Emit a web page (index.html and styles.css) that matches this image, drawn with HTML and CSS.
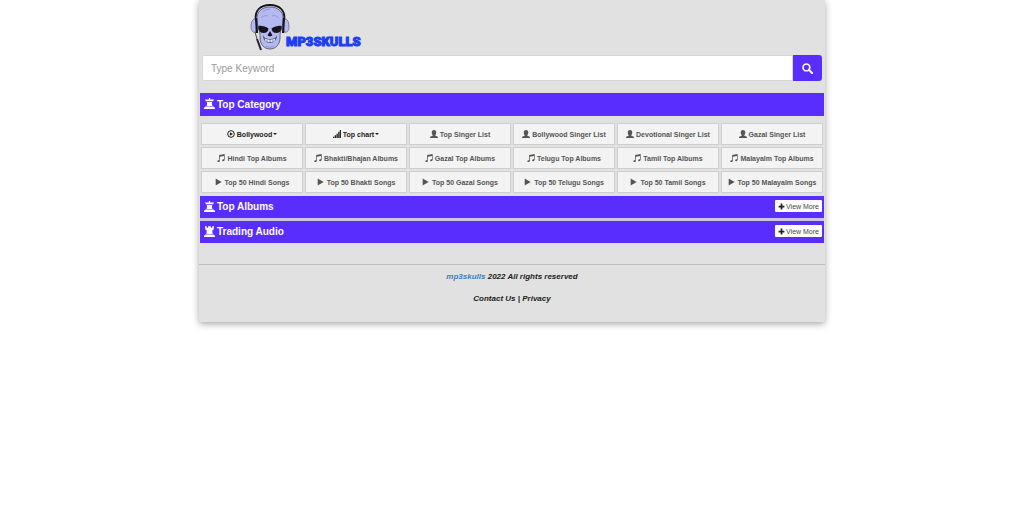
FILE: index.html
```html
<!DOCTYPE html>
<html lang="en">
<head>
  <meta charset="UTF-8" />
  <meta name="viewport" content="width=device-width, initial-scale=1.0"/>
  <title>mp3skulls</title>
  <link rel="stylesheet" href="styles.css">
</head>
<body>
  <!-- Icon set -->
  <svg class="sprite" aria-hidden="true">
    <symbol id="tower" viewBox="0 0 12 12">
      <path d="M5.300 0h1.400v1.500H11L9.800 3.600H2.200L1 1.500h4.300zM3 4.300h6l-.4 1.800.6 2.700H2.800l.6-2.700zM1.800 9.300h8.400l1.800 1.200V12H0v-1.500z"/>
    </symbol>
    <symbol id="rook" viewBox="0 0 12 12">
      <path d="M1 .3h2v1.600h1.500V.3h3v1.600H9V.3h2l-.5 3.500L9 5l.4 3.700H2.600L3 5 1.500 3.800zM1.800 9.300h8.400l1.800 1.200V12H0v-1.500z"/>
    </symbol>
    <symbol id="disc" viewBox="0 0 12 12">
      <circle cx="6" cy="6" r="5" fill="none" stroke="currentColor" stroke-width="1.5"/>
      <path d="M4.3 3.2 9 6 4.3 8.8z"/>
    </symbol>
    <symbol id="signal" viewBox="0 0 12 12">
      <path d="M0 10h2v2H0zM2.6 8h2v4h-2zM5.2 5.5h2V12h-2zM7.8 2.8h2V12h-2zM10.3 0H12v12h-1.7z"/>
    </symbol>
    <symbol id="user" viewBox="0 0 12 12">
      <path d="M6 0c2.300 0 3.400 1.400 3.400 3.600 0 1.700-.6 3.200-1.400 3.900v1l3 1.300c.7.300 1 .8 1 2.200H0c0-1.400.3-1.900 1-2.200l3-1.300v-1C3.200 6.800 2.600 5.300 2.600 3.600 2.600 1.400 3.700 0 6 0z"/>
    </symbol>
    <symbol id="music" viewBox="0 0 12 12">
      <path d="M3.200 1.600 11.500 0v8.800c0 1.300-1 2-2.200 2-1 0-1.600-.5-1.600-1.200 0-1 1.200-1.700 2.800-1.600V3L4.300 4.200v6c0 1.200-1 1.800-2.200 1.800-1 0-1.700-.5-1.700-1.200 0-1 1.200-1.700 2.800-1.600z"/>
    </symbol>
    <symbol id="play" viewBox="0 0 12 12">
      <path d="M1 .8 10 6 1 11.200z"/>
    </symbol>
    <symbol id="plus" viewBox="0 0 12 12">
      <path d="M4.500 1h3v3.500H11v3H7.500V11h-3V7.500H1v-3h3.500z"/>
    </symbol>
    <symbol id="search" viewBox="0 0 12 12">
      <circle cx="4.800" cy="4.800" r="3.700" fill="none" stroke="currentColor" stroke-width="1.800"/>
      <path d="M7.500 7.500 11 11" stroke="currentColor" stroke-width="2.200" stroke-linecap="round"/>
    </symbol>
  </svg>

  <div class="container">
    <header>
      <a href="#" class="logo">
        <svg class="skull" viewBox="0 0 40 48" aria-hidden="true">
          <path d="M6 18C4 8 10 2 20 2s16 6 14 16" fill="none" stroke="#15151f" stroke-width="1.800"/>
          <path d="M7 17C6 9 12 4 20 4s14 5 13 13c0 4-1 7-2 10-1 3-1 4-1 8 0 6-4 11-10 11s-10-5-10-11c0-4 0-5-1-8-1-3-2-6-2-10z" fill="#b4baf0" stroke="#34364f" stroke-width=".7"/>
          <path d="M4 16c-2 1-3 4-3 8s2 6 5 5l1-12zM36 16c2 1 3 4 3 8s-2 6-5 5l-1-12z" fill="#b4baf0" stroke="#5c6086" stroke-width=".7"/>
          <path d="M6 15l1 15M34 15l-1 15" stroke="#15151f" stroke-width="2.200"/>
          <path d="M8.500 23c3-.5 7 .5 10 2.500-.3 3-2 4.500-5 4.500-4 0-5.500-3.500-5-7zM31.500 23c-3-.5-7 .5-10 2.500.3 3 2 4.500 5 4.500 4 0 5.500-3.500 5-7z" fill="#15151f"/>
          <path d="M20 28l-2.500 4.500 2.500 1 2.500-1z" fill="#15151f"/>
          <path d="M13 32c1 3 3 4 7 4s6-1 7-4c0 5-3 8-7 8s-7-3-7-8z" fill="#3a3e60"/>
          <path d="M14.500 35.500c3 1.500 8 1.500 11 0l-1 3c-2 1-7 1-9 0z" fill="#dfe2ff"/>
          <path d="M17 36.500v2.500M20 37v2.500M23 36.500v2.500" stroke="#3a3e60" stroke-width=".5"/>
          <path d="M13 9c2-2 4-3 7-3M11 15c2-2 5-3 7-2M29 15c-2-2-4-3-7-2M16 43c2 1.500 6 1.500 8 0" fill="none" stroke="#8188c6" stroke-width=".7"/>
          <path d="M5 29l2 7" fill="none" stroke="#44444e" stroke-width="1"/>
          <path d="M7 36l4 11" fill="none" stroke="#24242e" stroke-width="2"/>
        </svg>
        <span class="logo-text">MP3SKULLS</span>
      </a>
    </header>

    <form class="search-form">
      <input type="text" id="keyword" aria-label="Type Keyword" placeholder="Type Keyword" />
      <button type="submit" aria-label="Search"><svg class="search-icon"><use href="#search"/></svg></button>
    </form>

    <main>
      <h2 class="bar top-bar"><svg class="bar-icon"><use href="#tower"/></svg>Top Category</h2>

      <nav class="category">
        <button type="button" class="item drop"><svg class="icon"><use href="#disc"/></svg>Bollywood<span class="caret"></span></button>
        <button type="button" class="item drop"><svg class="icon"><use href="#signal"/></svg>Top chart<span class="caret"></span></button>
        <a href="#" class="item"><svg class="icon"><use href="#user"/></svg>Top Singer List</a>
        <a href="#" class="item"><svg class="icon"><use href="#user"/></svg>Bollywood Singer List</a>
        <a href="#" class="item"><svg class="icon"><use href="#user"/></svg>Devotional Singer List</a>
        <a href="#" class="item"><svg class="icon"><use href="#user"/></svg>Gazal Singer List</a>

        <a href="#" class="item"><svg class="icon"><use href="#music"/></svg>Hindi Top Albums</a>
        <a href="#" class="item"><svg class="icon"><use href="#music"/></svg>Bhakti/Bhajan Albums</a>
        <a href="#" class="item"><svg class="icon"><use href="#music"/></svg>Gazal Top Albums</a>
        <a href="#" class="item"><svg class="icon"><use href="#music"/></svg>Telugu Top Albums</a>
        <a href="#" class="item"><svg class="icon"><use href="#music"/></svg>Tamil Top Albums</a>
        <a href="#" class="item"><svg class="icon"><use href="#music"/></svg>Malayalm Top Albums</a>

        <a href="#" class="item"><svg class="icon"><use href="#play"/></svg>Top 50 Hindi Songs</a>
        <a href="#" class="item"><svg class="icon"><use href="#play"/></svg>Top 50 Bhakti Songs</a>
        <a href="#" class="item"><svg class="icon"><use href="#play"/></svg>Top 50 Gazal Songs</a>
        <a href="#" class="item"><svg class="icon"><use href="#play"/></svg>Top 50 Telugu Songs</a>
        <a href="#" class="item"><svg class="icon"><use href="#play"/></svg>Top 50 Tamil Songs</a>
        <a href="#" class="item"><svg class="icon"><use href="#play"/></svg>Top 50 Malayalm Songs</a>
      </nav>

      <div class="sections">
        <div class="bar">
          <h2><svg class="bar-icon"><use href="#tower"/></svg>Top Albums</h2>
          <a href="#" class="more"><svg class="more-icon"><use href="#plus"/></svg>View More</a>
        </div>
        <div class="bar">
          <h2><svg class="bar-icon"><use href="#rook"/></svg>Trading Audio</h2>
          <a href="#" class="more"><svg class="more-icon"><use href="#plus"/></svg>View More</a>
        </div>
      </div>
    </main>

    <footer>
      <p><a href="#" class="brand">mp3skulls</a> 2022 All rights reserved</p>
      <p><a href="#">Contact Us</a> | <a href="#">Privacy</a></p>
    </footer>
  </div>
</body>
</html>
```
FILE: styles.css
```css
* {
  box-sizing: border-box;
}

body {
  margin: 0;
  padding-bottom: 20px;
  font-family: "Liberation Sans", Arial, sans-serif;
  background-color: #fff;
  color: #222;
}

a {
  color: inherit;
  text-decoration: none;
}

svg {
  fill: currentColor;
  flex-shrink: 0;
}

.sprite {
  display: none;
}

.container {
  width: 92%;
  max-width: 626px;
  margin: 0 auto;
  border-radius: 0 0 2px 2px;
  background-color: #e1e1e1;
  box-shadow: 0 2px 7px rgba(0, 0, 0, 0.35);
}

/* logo */
header {
  padding: 3px 0 4px 51px;
}

.logo {
  display: inline-flex;
  align-items: flex-end;
  vertical-align: top;
}

.skull {
  width: 40px;
  height: 48px;
}

.logo-text {
  margin-left: -4px;
  padding-bottom: 2px;
  font-family: Roboto, "Liberation Sans", sans-serif;
  font-size: 13px;
  line-height: 14px;
  font-weight: 900;
  color: #1d3df5;
  -webkit-text-stroke: 1px #1d3df5;
}

/* search */
.search-form {
  display: flex;
  padding: 0 3px;
}

.search-form input {
  flex: 1;
  min-width: 0;
  height: 26px;
  padding: 0 8px;
  border: 1px solid #d6d6d6;
  border-radius: 2px 0 0 2px;
  background-color: #fff;
  font-family: inherit;
  font-size: 10px;
}

.search-form input::placeholder {
  color: #999;
}

.search-form button {
  display: flex;
  align-items: center;
  justify-content: center;
  width: 29px;
  padding: 0;
  border: none;
  border-radius: 0 3px 3px 0;
  background-color: #5a2dff;
  color: #fff;
  cursor: pointer;
}

.search-icon {
  width: 11px;
  height: 11px;
}

/* section bars */
main {
  padding: 12px 1px 21px;
}

.bar {
  display: flex;
  align-items: center;
  justify-content: space-between;
  height: 22px;
  padding: 0 2px 0 4px;
  background-color: #5a2dff;
  color: #fff;
}

h2 {
  display: flex;
  align-items: center;
  margin: 0;
  font-size: 10px;
  line-height: 12px;
  font-weight: bold;
}

.top-bar {
  justify-content: flex-start;
  height: 23px;
}

.bar-icon {
  width: 11px;
  height: 11px;
  margin: 0 2px 2px 0;
}

.sections {
  display: grid;
  gap: 3px;
  background-color: #c9c5e4;
}

.more {
  display: flex;
  align-items: center;
  gap: 1px;
  height: 12px;
  margin-bottom: 2px;
  padding: 0 3px;
  border-radius: 1px;
  background-color: #fff;
  color: #444;
  font-size: 7px;
}

.more-icon {
  width: 7px;
  height: 7px;
  color: #222;
}

/* category grid */
.category {
  display: grid;
  grid-template-columns: repeat(6, 1fr);
  gap: 2px;
  padding: 7px 1px 3px;
}

.item {
  display: flex;
  align-items: center;
  justify-content: center;
  height: 22px;
  padding: 0;
  border: 1px solid #cfcfcf;
  background-color: #f3f3f3;
  color: #555;
  font-family: inherit;
  font-size: 7px;
  font-weight: bold;
  white-space: nowrap;
}

.drop {
  color: #222;
  cursor: pointer;
}

.icon {
  width: 8px;
  height: 8px;
  margin-right: 2px;
}

.caret {
  margin-left: 1px;
  border: 2px solid transparent;
  border-top-color: currentColor;
  border-bottom: none;
}

/* footer */
footer {
  padding: 6px 0 17px;
  border-top: 1px solid #bfbfbf;
  text-align: center;
  font-size: 8px;
  line-height: 12px;
  font-weight: bold;
  font-style: italic;
}

footer p {
  margin: 0 0 10px;
}

footer p:last-child {
  margin: 0;
}

.brand {
  color: #3b7fc4;
}

@media screen and (max-width: 600px) {
  .category {
    grid-template-columns: repeat(3, 1fr);
  }
}
```
